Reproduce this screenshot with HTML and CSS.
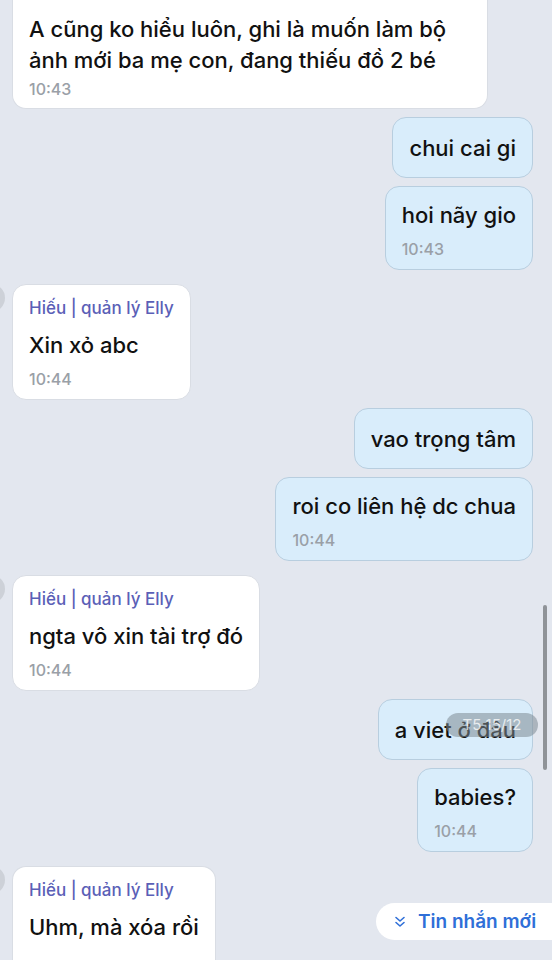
FILE: index.html
```html
<!DOCTYPE html>
<html lang="vi">
<head>
    <meta charset="UTF-8">
    <meta name="viewport" content="width=device-width, initial-scale=1.0">
    <title>Chat</title>
    <link rel="stylesheet" href="styles.css">
</head>
<body>
    <div class="chat">
        <div class="row in">
            <div class="bubble cut-top">
                <div class="text">A cũng ko hiểu luôn, ghi là muốn làm bộ<br>ảnh mới ba mẹ con, đang thiếu đồ 2 bé</div>
                <div class="time">10:43</div>
            </div>
        </div>

        <div class="row out">
            <div class="bubble"><div class="text">chui cai gi</div></div>
        </div>
        <div class="row out">
            <div class="bubble">
                <div class="text">hoi nãy gio</div>
                <div class="time">10:43</div>
            </div>
        </div>

        <div class="row in group">
            <div class="avatar"></div>
            <div class="bubble">
                <div class="name">Hiếu | quản lý Elly</div>
                <div class="text">Xin xỏ abc</div>
                <div class="time">10:44</div>
            </div>
        </div>

        <div class="row out">
            <div class="bubble"><div class="text">vao trọng tâm</div></div>
        </div>
        <div class="row out">
            <div class="bubble">
                <div class="text">roi co liên hệ dc chua</div>
                <div class="time">10:44</div>
            </div>
        </div>

        <div class="row in group">
            <div class="avatar"></div>
            <div class="bubble">
                <div class="name">Hiếu | quản lý Elly</div>
                <div class="text">ngta vô xin tài trợ đó</div>
                <div class="time">10:44</div>
            </div>
        </div>

        <div class="row out">
            <div class="bubble"><div class="text">a viet ở đâu</div></div>
        </div>
        <div class="row out">
            <div class="bubble">
                <div class="text">babies?</div>
                <div class="time">10:44</div>
            </div>
        </div>

        <div class="row in group">
            <div class="avatar"></div>
            <div class="bubble cut-bottom">
                <div class="name">Hiếu | quản lý Elly</div>
                <div class="text">Uhm, mà xóa rồi</div>
            </div>
        </div>
    </div>

    <div class="date-pill">T5 15/12</div>
    <div class="scrollbar"></div>

    <div class="new-msg">
        <svg width="14" height="14" viewBox="0 0 14 14" fill="none" stroke="#2f6fd8" stroke-width="1.6" stroke-linecap="round" stroke-linejoin="round">
            <path d="M3 2.5 L7 6 L11 2.5"/>
            <path d="M3 7.5 L7 11 L11 7.5"/>
        </svg>
        <span>Tin nhắn mới</span>
    </div>
</body>
</html>
```

FILE: styles.css
```css
body {
    margin: 0;
    width: 552px;
    height: 960px;
    overflow: hidden;
    position: relative;
    background: #e3e7ef;
    font-family: 'Inter', 'Roboto', sans-serif;
    color: #111;
}
.chat {
    display: flex;
    flex-direction: column;
    gap: 8px;
    padding: 0 19px 0 12px;
}
.row {
    display: flex;
    align-items: flex-start;
}
.row.out {
    justify-content: flex-end;
}
.row.group {
    margin-top: 6px;
}
.avatar {
    width: 28px;
    height: 28px;
    border-radius: 50%;
    background: #cdd1d8;
    margin-left: -35px;
    margin-right: 7px;
    margin-top: 0;
    flex-shrink: 0;
}
.bubble {
    border-radius: 14px;
    padding: 13px 16px 11px;
    box-sizing: border-box;
}
.in .bubble {
    background: #fff;
    border: 1px solid #d9dde4;
}
.out .bubble {
    background: #d9edfb;
    border: 1px solid #b8cedf;
}
.bubble.cut-top {
    width: 476px;
    border-top: none;
    border-radius: 0 0 14px 14px;
    padding-top: 14px;
    padding-bottom: 10px;
}
.bubble.cut-top .time {
    margin-top: 4px;
}
.bubble.cut-bottom {
    padding-bottom: 40px;
    border-bottom: none;
    border-radius: 14px 14px 0 0;
}
.text {
    font-size: 22px;
    font-weight: 500;
    line-height: 31px;
}
.out .bubble .text:only-child {
    padding: 2px 0;
}
.time {
    font-size: 16px;
    font-weight: 500;
    line-height: 18px;
    color: #9aa0a7;
    margin-top: 9px;
}
.name {
    font-size: 17px;
    line-height: 20px;
    font-weight: 500;
    color: #5b5fb7;
    margin-bottom: 12px;
    margin-top: 0;
}
.date-pill {
    position: absolute;
    left: 446px;
    top: 713px;
    width: 92px;
    height: 24px;
    border-radius: 12px;
    background: rgba(125, 138, 148, 0.55);
    color: rgba(255, 255, 255, 0.75);
    font-size: 15px;
    line-height: 24px;
    text-align: center;
}
.scrollbar {
    position: absolute;
    left: 543px;
    top: 605px;
    width: 4px;
    height: 165px;
    border-radius: 2px;
    background: #8f9398;
}
.new-msg {
    position: absolute;
    left: 376px;
    top: 903px;
    width: 200px;
    height: 37px;
    border-radius: 19px;
    background: #fff;
    display: flex;
    align-items: center;
    gap: 11px;
    padding-left: 17px;
    box-sizing: border-box;
    color: #2f6fd8;
    font-size: 19px;
    font-weight: 600;
}
```
